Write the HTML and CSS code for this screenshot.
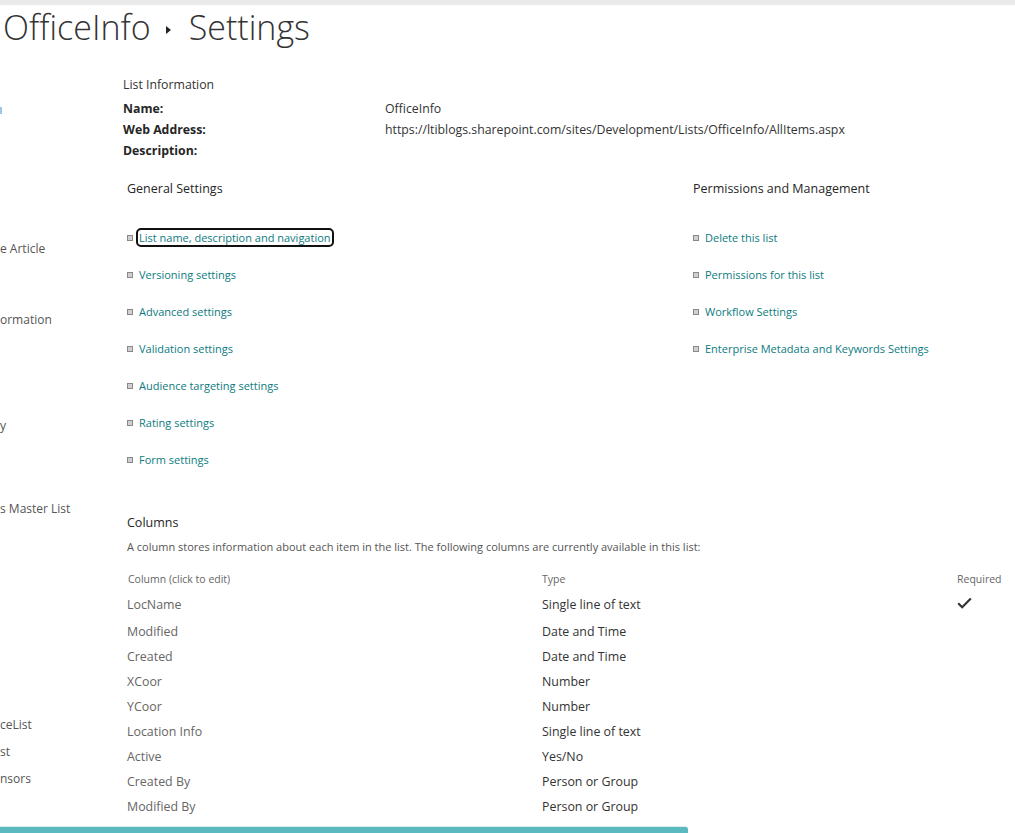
FILE: index.html
```html
<!DOCTYPE html>
<html lang="en">
<head>
<meta charset="utf-8">
<title>OfficeInfo - Settings</title>
<link rel="stylesheet" href="styles.css">
</head>
<body>
<div class="topbar"></div>
<header class="title">
  <span class="crumb">OfficeInfo</span>
  <span class="sep"></span>
  <span class="crumb">Settings</span>
</header>
<div class="page">
  <nav class="nav">
    <a class="nav-frag nav-blue" href="#"> </a>
    <a class="nav-item i1" href="#">e Article</a>
    <a class="nav-item i2" href="#">ormation</a>
    <a class="nav-item i3" href="#">y</a>
    <a class="nav-item i4" href="#">s Master List</a>
    <a class="nav-item i5" href="#">ceList</a>
    <a class="nav-item i6" href="#">st</a>
    <a class="nav-item i7" href="#">nsors</a>
  </nav>
  <main class="main">
    <section class="info">
      <div class="info-title">List Information</div>
      <div class="info-row"><span class="info-label">Name:</span><span class="info-val">OfficeInfo</span></div>
      <div class="info-row"><span class="info-label">Web Address:</span><span class="info-val url">https://ltiblogs.sharepoint.com/sites/Development/Lists/OfficeInfo/AllItems.aspx</span></div>
      <div class="info-row"><span class="info-label">Description:</span><span class="info-val"></span></div>
    </section>
    <section class="settings">
      <div class="group">
        <h3 class="group-title">General Settings</h3>
        <ul class="links">
          <li><span class="bullet"></span><a class="focused" href="#">List name, description and navigation</a></li>
          <li><span class="bullet"></span><a href="#">Versioning settings</a></li>
          <li><span class="bullet"></span><a href="#">Advanced settings</a></li>
          <li><span class="bullet"></span><a href="#">Validation settings</a></li>
          <li><span class="bullet"></span><a href="#">Audience targeting settings</a></li>
          <li><span class="bullet"></span><a href="#">Rating settings</a></li>
          <li><span class="bullet"></span><a href="#">Form settings</a></li>
        </ul>
      </div>
      <div class="group">
        <h3 class="group-title">Permissions and Management</h3>
        <ul class="links">
          <li><span class="bullet"></span><a href="#">Delete this list</a></li>
          <li><span class="bullet"></span><a href="#">Permissions for this list</a></li>
          <li><span class="bullet"></span><a href="#">Workflow Settings</a></li>
          <li><span class="bullet"></span><a href="#">Enterprise Metadata and Keywords Settings</a></li>
        </ul>
      </div>
    </section>
    <section class="columns">
      <h3 class="group-title">Columns</h3>
      <p class="desc">A column stores information about each item in the list. The following columns are currently available in this list:</p>
      <div class="col-table">
        <div class="col-head"><span>Column (click to edit)</span><span>Type</span><span>Required</span></div>
        <div class="col-row first"><span class="cname">LocName</span><span class="ctype">Single line of text</span><span class="creq"><svg width="15" height="12" viewBox="0 0 15 12"><path d="M1.2 6.2 L5.2 10.2 L13.8 1.4" fill="none" stroke="#333" stroke-width="2.2"/></svg></span></div>
        <div class="col-row"><span class="cname">Modified</span><span class="ctype">Date and Time</span><span></span></div>
        <div class="col-row"><span class="cname">Created</span><span class="ctype">Date and Time</span><span></span></div>
        <div class="col-row"><span class="cname">XCoor</span><span class="ctype">Number</span><span></span></div>
        <div class="col-row"><span class="cname">YCoor</span><span class="ctype">Number</span><span></span></div>
        <div class="col-row"><span class="cname">Location Info</span><span class="ctype">Single line of text</span><span></span></div>
        <div class="col-row"><span class="cname">Active</span><span class="ctype">Yes/No</span><span></span></div>
        <div class="col-row"><span class="cname">Created By</span><span class="ctype">Person or Group</span><span></span></div>
        <div class="col-row"><span class="cname">Modified By</span><span class="ctype">Person or Group</span><span></span></div>
      </div>
    </section>
  </main>
</div>
<div class="progress"></div>
</body>
</html>
```

FILE: styles.css
```css
html, body {
  margin: 0;
  padding: 0;
  background: #fff;
  overflow: hidden;
}
body {
  font-family: "Open Sans", "Noto Sans", "Liberation Sans", sans-serif;
  color: #333;
  width: 1015px;
  height: 833px;
}
a { text-decoration: none; }

.topbar {
  height: 5px;
  background: #eaeaea;
}

.title {
  height: 45px;
  display: flex;
  align-items: center;
  padding-left: 3px;
  font-size: 34px;
  font-weight: 300;
  color: #333;
  line-height: 45px;
}
.title .sep {
  width: 0;
  height: 0;
  border-top: 4.5px solid transparent;
  border-bottom: 4.5px solid transparent;
  border-left: 5px solid #222;
  margin: 5px 18px 0 15px;
}

.page {
  display: flex;
}

.nav {
  width: 123px;
  flex: none;
  position: relative;
  height: 780px;
  font-size: 12px;
  color: #555;
}
.nav-item {
  position: absolute;
  left: 0;
  color: #555;
  line-height: 20px;
  white-space: nowrap;
}
.nav-frag {
  position: absolute;
  left: 0;
  top: 57px;
  width: 2px;
  height: 7px;
  background: #9cc7ea;
}
.i1 { top: 189px; }
.i2 { top: 260px; }
.i3 { top: 366px; }
.i4 { top: 449px; }
.i5 { top: 665px; }
.i6 { top: 692px; }
.i7 { top: 719px; }

.main {
  flex: 1;
  padding-top: 24px;
}

.info {
  font-size: 12.3px;
}
.info-title {
  line-height: 21px;
  margin-bottom: 3px;
  color: #333;
}
.info-row {
  display: flex;
  line-height: 21px;
}
.info-label {
  width: 262px;
  font-weight: 700;
  color: #262626;
}
.info-val {
  color: #333;
}

.settings {
  display: grid;
  grid-template-columns: 566px 1fr;
  padding-left: 4px;
  margin-top: 18px;
}
.group-title {
  margin: 0;
  font-size: 12.5px;
  font-weight: 400;
  line-height: 20px;
  color: #262626;
}
.links {
  list-style: none;
  margin: 20px 0 0;
  padding: 0;
  font-size: 11px;
}
.links li {
  display: flex;
  align-items: center;
  height: 37px;
}
.bullet {
  width: 4px;
  height: 4px;
  border: 1px solid #888;
  background: #d0d0d0;
  margin: 1px 6px 0 0;
}
.links a {
  color: #0b7b80;
  line-height: 15px;
}
.links a.focused {
  outline: 2px solid #111;
  outline-offset: 0;
  border-radius: 3px;
  padding: 0 1px;
  margin-left: -1px;
}

.columns {
  padding-left: 4px;
  margin-top: 35px;
}
.desc {
  margin: 6px 0 0;
  font-size: 11px;
  line-height: 16px;
  color: #555;
}
.col-table {
  margin-top: 16px;
}
.col-head, .col-row {
  display: grid;
  grid-template-columns: 415px 415px 1fr;
}
.col-head {
  font-size: 10.5px;
  color: #666;
  line-height: 16px;
}
.col-head span:first-child { padding-left: 1px; }
.col-row {
  font-size: 12.4px;
  line-height: 25px;
  height: 25px;
}
.col-row.first {
  margin-top: 5px;
  height: 27px;
  line-height: 25px;
}
.cname { color: #666; }
.ctype { color: #333; }
.creq svg { display: block; margin-top: 5px; }

.progress {
  position: fixed;
  left: 0;
  bottom: 0;
  width: 688px;
  height: 6px;
  background: #5bbac0;
  border-top: 1px solid #d9ecee;
  border-radius: 0 3px 0 0;
}
```
